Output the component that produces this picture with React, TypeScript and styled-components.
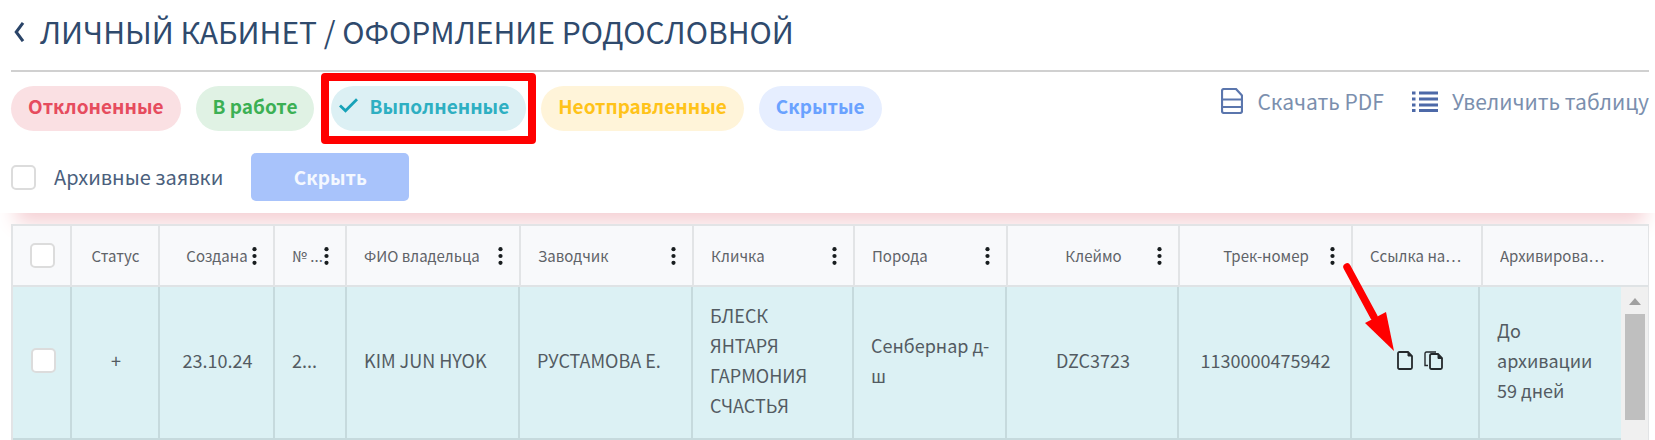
import React from "react";
import styled, { createGlobalStyle } from "styled-components";

const GlobalStyle = createGlobalStyle`
  *, *::before, *::after { box-sizing: border-box; }
  body {
    margin: 0;
    background: #fff;
    color: #2f4a6d;
    font-family: "Noto Sans CJK SC", "Noto Sans", sans-serif;
  }
  button, input { font: inherit; margin: 0; }
`;

const Page = styled.main`
  display: flex;
  flex-direction: column;
`;

const Top = styled.header`
  padding: 0 6px 12px 11px;
`;

const TitleBar = styled.div`
  display: flex;
  align-items: center;
  gap: 15px;
  height: 72px;
  padding-bottom: 8px;
  border-bottom: 2px solid #d0d0d0;
`;

const BackLink = styled.a`
  display: flex;
  padding-left: 2px;
  color: #2a4468;
`;

const Title = styled.h1`
  margin: 0;
  font-size: 30px;
  line-height: 40px;
  font-weight: 400;
  white-space: nowrap;
`;

const FilterBar = styled.div`
  display: flex;
  justify-content: space-between;
  align-items: flex-start;
  padding-top: 14px;
`;

const Filters = styled.div`
  display: flex;
  gap: 15px;
`;

const Chip = styled.button<{ $fg: string; $bg: string; $checked?: boolean }>`
  display: flex;
  align-items: center;
  gap: 11px;
  height: 45px;
  padding: 0 17px 6px ${(p) => (p.$checked ? 8 : 17)}px;
  border: 0;
  border-radius: 23px;
  background: ${(p) => p.$bg};
  color: ${(p) => p.$fg};
  font-size: 19px;
  font-weight: 700;
  white-space: nowrap;
`;

const Highlighted = styled.div`
  position: relative;
  margin-left: 2px;
`;

const HighlightFrame = styled.span`
  position: absolute;
  inset: -13px -10px;
  border: 8px solid #ff0000;
  border-radius: 4px;
  pointer-events: none;
`;

const Actions = styled.div`
  display: flex;
  gap: 28px;
`;

const Action = styled.button`
  display: flex;
  align-items: center;
  gap: 14px;
  height: 32px;
  padding: 0 0 2px;
  border: 0;
  background: none;
  color: #7b8fae;
  font-size: 21px;
  line-height: 30px;
  white-space: nowrap;
`;

const ArchiveBar = styled.div`
  display: flex;
  align-items: center;
  gap: 28px;
  padding-top: 22px;
`;

const ArchiveLabel = styled.label`
  display: flex;
  align-items: center;
  gap: 18px;
  color: #4b5f7d;
  font-size: 20px;
  line-height: 32px;
`;

const Checkbox = styled.input.attrs({ type: "checkbox" })`
  appearance: none;
  flex: none;
  display: block;
  width: 25px;
  height: 25px;
  border: 2px solid #dcdcdc;
  border-radius: 5px;
  background: #fff;
`;

const HideButton = styled.button`
  width: 158px;
  height: 48px;
  padding: 0 0 2px;
  border: 0;
  border-radius: 5px;
  background: #a8c3fb;
  color: #f4f8ff;
  font-size: 19px;
  font-weight: 700;
`;

const GridSection = styled.section`
  position: relative;
  padding: 11px 6px 0 11px;
  overflow: hidden;
`;

const Glow = styled.div`
  position: absolute;
  inset: -20px 20px auto 26px;
  height: 20px;
  box-shadow: 0 0 20px 10px #f5d0d4;
`;

const Grid = styled.div`
  position: relative;
  border: 2px solid #e2e4e6;
  border-bottom: 0;
`;

const Table = styled.table`
  width: 100%;
  table-layout: fixed;
  border-collapse: separate;
  border-spacing: 0;
`;

const HeadCell = styled.th`
  height: 61px;
  padding: 0 0 0 17px;
  border-right: 2px solid #e2e4e6;
  border-bottom: 2px solid #dfe3e5;
  background: #f8f9fb;
  color: #5f6368;
  font-size: 15px;
  line-height: 24px;
  font-weight: 400;
  text-align: left;
  &:last-child { border-right: 0; }
`;

const HeadInner = styled.div`
  display: flex;
  align-items: center;
  padding-right: 16px;
`;

const HeadText = styled.span<{ $center?: boolean; $menu?: boolean }>`
  flex: 1;
  min-width: 0;
  padding-left: ${(p) => (p.$center && p.$menu ? 5 : 0)}px;
  overflow: hidden;
  white-space: nowrap;
  text-align: ${(p) => (p.$center ? "center" : "left")};
`;

const MenuButton = styled.button`
  display: flex;
  flex: none;
  padding: 0;
  border: 0;
  background: none;
  color: #181d1f;
`;

const BodyRow = styled.div`
  display: flex;
`;

const Cell = styled.td<{ $center?: boolean }>`
  height: 153px;
  padding: 0 15px 5px 17px;
  border-right: 2px solid #c6dadd;
  border-bottom: 2px solid #c6dadd;
  background: #dcf1f4;
  color: #535b62;
  font-size: 18px;
  line-height: 30px;
  text-align: ${(p) => (p.$center ? "center" : "left")};
  vertical-align: middle;
  overflow-wrap: break-word;
  &:first-child { padding-left: 18px; }
  &:last-child { border-right: 0; }
`;

const LinkIcons = styled.div`
  position: relative;
  display: flex;
  justify-content: center;
  align-items: center;
  gap: 11px;
  padding-left: 8px;
`;

const IconButton = styled.button`
  display: flex;
  padding: 0;
  border: 0;
  background: none;
  color: #24292c;
`;

const Pointer = styled.svg`
  position: absolute;
  right: 69px;
  bottom: 18px;
  pointer-events: none;
`;

const Scrollbar = styled.div`
  display: flex;
  flex: none;
  flex-direction: column;
  align-items: center;
  width: 27px;
  padding-top: 11px;
  gap: 9px;
  background: #f0f0f0;
`;

const Thumb = styled.div`
  width: 20px;
  height: 106px;
  background: #bfbfbf;
`;

type Column = {
  title: string;
  head: number;
  body: number;
  value: string;
  center?: boolean;
  menu?: boolean;
};

const columns: Column[] = [
  { title: "Статус", head: 88, body: 88, value: "+", center: true },
  { title: "Создана", head: 115, body: 115, value: "23.10.24", center: true, menu: true },
  { title: "№ ...", head: 72, body: 72, value: "2...", menu: true },
  { title: "ФИО владельца", head: 174, body: 173, value: "KIM JUN HYOK", menu: true },
  { title: "Заводчик", head: 173, body: 173, value: "РУСТАМОВА Е.", menu: true },
  { title: "Кличка", head: 161, body: 161, value: "БЛЕСК ЯНТАРЯ ГАРМОНИЯ СЧАСТЬЯ", menu: true },
  { title: "Порода", head: 153, body: 153, value: "Сенбернар д-ш", menu: true },
  { title: "Клеймо", head: 172, body: 172, value: "DZC3723", center: true, menu: true },
  { title: "Трек-номер", head: 173, body: 173, value: "1130000475942", center: true, menu: true },
  { title: "Ссылка на…", head: 130, body: 128, value: "" },
  { title: "Архивирова…", head: 165, body: 141, value: "До архивации 59 дней" },
];

const Dots = () => (
  <svg width="5" height="18" viewBox="0 0 5 18" fill="currentColor">
    <circle cx="2.5" cy="2.2" r="2.1" />
    <circle cx="2.5" cy="9" r="2.1" />
    <circle cx="2.5" cy="15.8" r="2.1" />
  </svg>
);

const PageIcon = () => (
  <svg width="16" height="19" viewBox="0 0 16 19" fill="none" stroke="currentColor" strokeWidth="1.8">
    <path d="M1 2.5Q1 1 2.5 1H11L15 5V16.5Q15 18 13.5 18H2.5Q1 18 1 16.5Z" />
    <path d="M11 1V5H15Z" fill="currentColor" strokeWidth="1" />
  </svg>
);

const CopyIcon = () => (
  <svg width="19" height="19" viewBox="0 0 19 19" fill="none" stroke="currentColor" strokeWidth="1.8">
    <path d="M12 1H2.5Q1 1 1 2.5V14.5H4" strokeWidth="1.4" />
    <path d="M6 4.5Q6 3 7.5 3H14L18 7V16.5Q18 18 16.5 18H7.5Q6 18 6 16.5Z" />
    <path d="M14 3V7.5H18Z" fill="currentColor" strokeWidth="1" />
  </svg>
);

const Arrow = () => (
  <Pointer width="56" height="93" viewBox="0 0 56 93">
    <path d="M9 8L36 58" stroke="#ff0000" strokeWidth="7.5" strokeLinecap="round" />
    <path d="M27 64L48 53L56 92Z" fill="#ff0000" />
  </Pointer>
);

export default function App() {
  return (
    <Page>
      <GlobalStyle />
      <Top>
        <TitleBar>
          <BackLink href="#" aria-label="Назад">
            <svg width="12" height="22" viewBox="0 0 12 22" fill="none" stroke="currentColor" strokeWidth="3">
              <path d="M10 2.8L3.2 12L10 21.2" />
            </svg>
          </BackLink>
          <Title>ЛИЧНЫЙ КАБИНЕТ / ОФОРМЛЕНИЕ РОДОСЛОВНОЙ</Title>
        </TitleBar>
        <FilterBar>
          <Filters>
            <Chip $fg="#e64c5e" $bg="#fae0e3">Отклоненные</Chip>
            <Chip $fg="#3cb054" $bg="#e0f2e4">В работе</Chip>
            <Highlighted>
              <Chip $fg="#2eafc2" $bg="#dcf0f4" $checked>
                <svg width="19" height="15" viewBox="0 0 19 15" fill="none" stroke="#17a2b8" strokeWidth="2.8">
                  <path d="M1 7.5L6.5 12.8L18 1.2" />
                </svg>
                Выполненные
              </Chip>
              <HighlightFrame />
            </Highlighted>
            <Chip $fg="#ffc31a" $bg="#fff4d9">Неотправленные</Chip>
            <Chip $fg="#6aa2ff" $bg="#e6eeff">Скрытые</Chip>
          </Filters>
          <Actions>
            <Action>
              <svg width="22" height="26" viewBox="0 0 22 26" fill="none" stroke="#5b76ad" strokeWidth="2.2">
                <path d="M1 3Q1 1 3 1H15L21 7.5V23Q21 25 19 25H3Q1 25 1 23Z" />
                <path d="M1 11.5H21M1 19H21" />
              </svg>
              Скачать PDF
            </Action>
            <Action>
              <svg width="26" height="21" viewBox="0 0 26 21" fill="none" stroke="#4d69a8" strokeWidth="2.8">
                <path d="M0 2H3.5M0 8H3.5M0 14H3.5M0 19.5H3.5M7 2H26M7 8H26M7 14H26M7 19.5H26" />
              </svg>
              Увеличить таблицу
            </Action>
          </Actions>
        </FilterBar>
        <ArchiveBar>
          <ArchiveLabel>
            <Checkbox />
            Архивные заявки
          </ArchiveLabel>
          <HideButton>Скрыть</HideButton>
        </ArchiveBar>
      </Top>
      <GridSection>
        <Glow />
        <Grid>
          <Table>
            <colgroup>
              <col style={{ width: 59 }} />
              {columns.map((c) => (
                <col key={c.title} style={{ width: c.head }} />
              ))}
            </colgroup>
            <thead>
              <tr>
                <HeadCell>
                  <Checkbox aria-label="Выбрать все" />
                </HeadCell>
                {columns.map((c) => (
                  <HeadCell key={c.title}>
                    <HeadInner>
                      <HeadText $center={c.center} $menu={c.menu}>{c.title}</HeadText>
                      {c.menu && (
                        <MenuButton aria-label={`Меню: ${c.title}`}>
                          <Dots />
                        </MenuButton>
                      )}
                    </HeadInner>
                  </HeadCell>
                ))}
              </tr>
            </thead>
          </Table>
          <BodyRow>
            <Table>
              <colgroup>
                <col style={{ width: 59 }} />
                {columns.map((c) => (
                  <col key={c.title} style={{ width: c.body }} />
                ))}
              </colgroup>
              <tbody>
                <tr>
                  <Cell>
                    <Checkbox aria-label="Выбрать заявку" />
                  </Cell>
                  {columns.map((c) => (
                    <Cell key={c.title} $center={c.center}>
                      {c.value || (
                        <LinkIcons>
                          <IconButton aria-label="Открыть документ"><PageIcon /></IconButton>
                          <IconButton aria-label="Скопировать ссылку"><CopyIcon /></IconButton>
                          <Arrow />
                        </LinkIcons>
                      )}
                    </Cell>
                  ))}
                </tr>
              </tbody>
            </Table>
            <Scrollbar>
              <svg width="12" height="7" viewBox="0 0 12 7" fill="#a0a0a0">
                <path d="M0 7L6 0L12 7Z" />
              </svg>
              <Thumb />
            </Scrollbar>
          </BodyRow>
        </Grid>
      </GridSection>
    </Page>
  );
}
